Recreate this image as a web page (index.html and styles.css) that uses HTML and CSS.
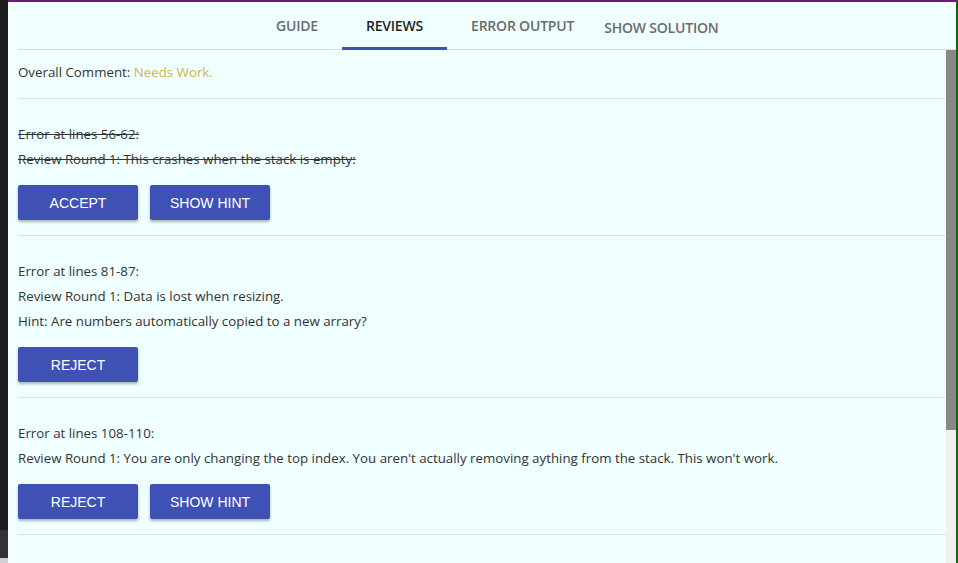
FILE: index.html
```html
<!DOCTYPE html>
<html>
<head>
<meta charset="utf-8">
<link rel="stylesheet" href="styles.css">
</head>
<body>
<div class="panel">
  <nav class="tabs">
    <div class="tab">GUIDE</div>
    <div class="tab active">REVIEWS</div>
    <div class="tab">ERROR OUTPUT</div>
    <div class="tab last">SHOW SOLUTION</div>
  </nav>
  <div class="body">
    <div class="scroller">
      <section class="overall">Overall Comment: <span class="needs">Needs Work.</span></section>
      <section class="review">
        <p class="line done">Error at lines 56-62:</p>
        <p class="line done">Review Round 1: This crashes when the stack is empty:</p>
        <div class="actions">
          <button class="btn">ACCEPT</button>
          <button class="btn">SHOW HINT</button>
        </div>
      </section>
      <section class="review">
        <p class="line">Error at lines 81-87:</p>
        <p class="line">Review Round 1: Data is lost when resizing.</p>
        <p class="line">Hint: Are numbers automatically copied to a new arrary?</p>
        <div class="actions">
          <button class="btn">REJECT</button>
        </div>
      </section>
      <section class="review">
        <p class="line">Error at lines 108-110:</p>
        <p class="line">Review Round 1: You are only changing the top index. You aren't actually removing aything from the stack. This won't work.</p>
        <div class="actions">
          <button class="btn">REJECT</button>
          <button class="btn">SHOW HINT</button>
        </div>
      </section>
    </div>
    <div class="scrollbar"><div class="thumb"></div></div>
  </div>
</div>
</body>
</html>
```
FILE: styles.css
```css
html, body {
  margin: 0;
  height: 100%;
}
body {
  background: linear-gradient(#1e1e1e 0 530px, #333333 530px 558px, #d0d0d0 558px);
  padding-left: 8px;
  box-sizing: border-box;
  font-family: "Open Sans", "Liberation Sans", sans-serif;
  overflow: hidden;
}
.panel {
  height: 563px;
  background: #f0ffff;
  border-top: 2px solid #6a1e72;
  border-right: 2px solid #0b6a0b;
  box-sizing: border-box;
  display: flex;
  flex-direction: column;
}
.tabs {
  display: flex;
  height: 48px;
  margin-left: 10px;
  padding-left: 234px;
  border-bottom: 1px solid #d8dee0;
  box-sizing: border-box;
  flex: none;
}
.tab {
  padding: 0 24px;
  font-size: 14px;
  font-weight: 600;
  color: #6b6b6b;
  line-height: 47px;
  border-bottom: 3px solid transparent;
  margin-bottom: -1px;
  letter-spacing: -0.2px;
}
.tab.active {
  color: #1f1f1f;
  border-bottom-color: #3f51b5;
}
.tab.last {
  padding: 0 6px;
  padding-top: 2px;
}
.body {
  flex: 1;
  display: flex;
  min-height: 0;
}
.scroller {
  flex: 1;
  overflow: hidden;
  padding-left: 10px;
}
.scrollbar {
  width: 10px;
  flex: none;
  background: #f0f0f0;
}
.thumb {
  height: 380px;
  background: #888888;
}
section {
  border-bottom: 1px solid #d5e3e5;
  font-size: 13.3px;
  color: #333;
}
.overall {
  padding: 10px 0 13px;
  line-height: 25px;
}
.needs {
  color: #d5b444;
}
.review {
  padding: 23px 0 15px;
}
.line {
  margin: 0;
  line-height: 25px;
}
.done {
  text-decoration: line-through;
}
.actions {
  display: flex;
  gap: 12px;
  margin-top: 13px;
}
.btn {
  width: 120px;
  height: 35px;
  border: none;
  border-radius: 2px;
  background: #3f51b5;
  color: #fff;
  font-family: "Liberation Sans", Arial, sans-serif;
  font-size: 14px;
  box-shadow: 0 2px 3px rgba(0,0,0,0.3);
  padding: 0;
}
```
